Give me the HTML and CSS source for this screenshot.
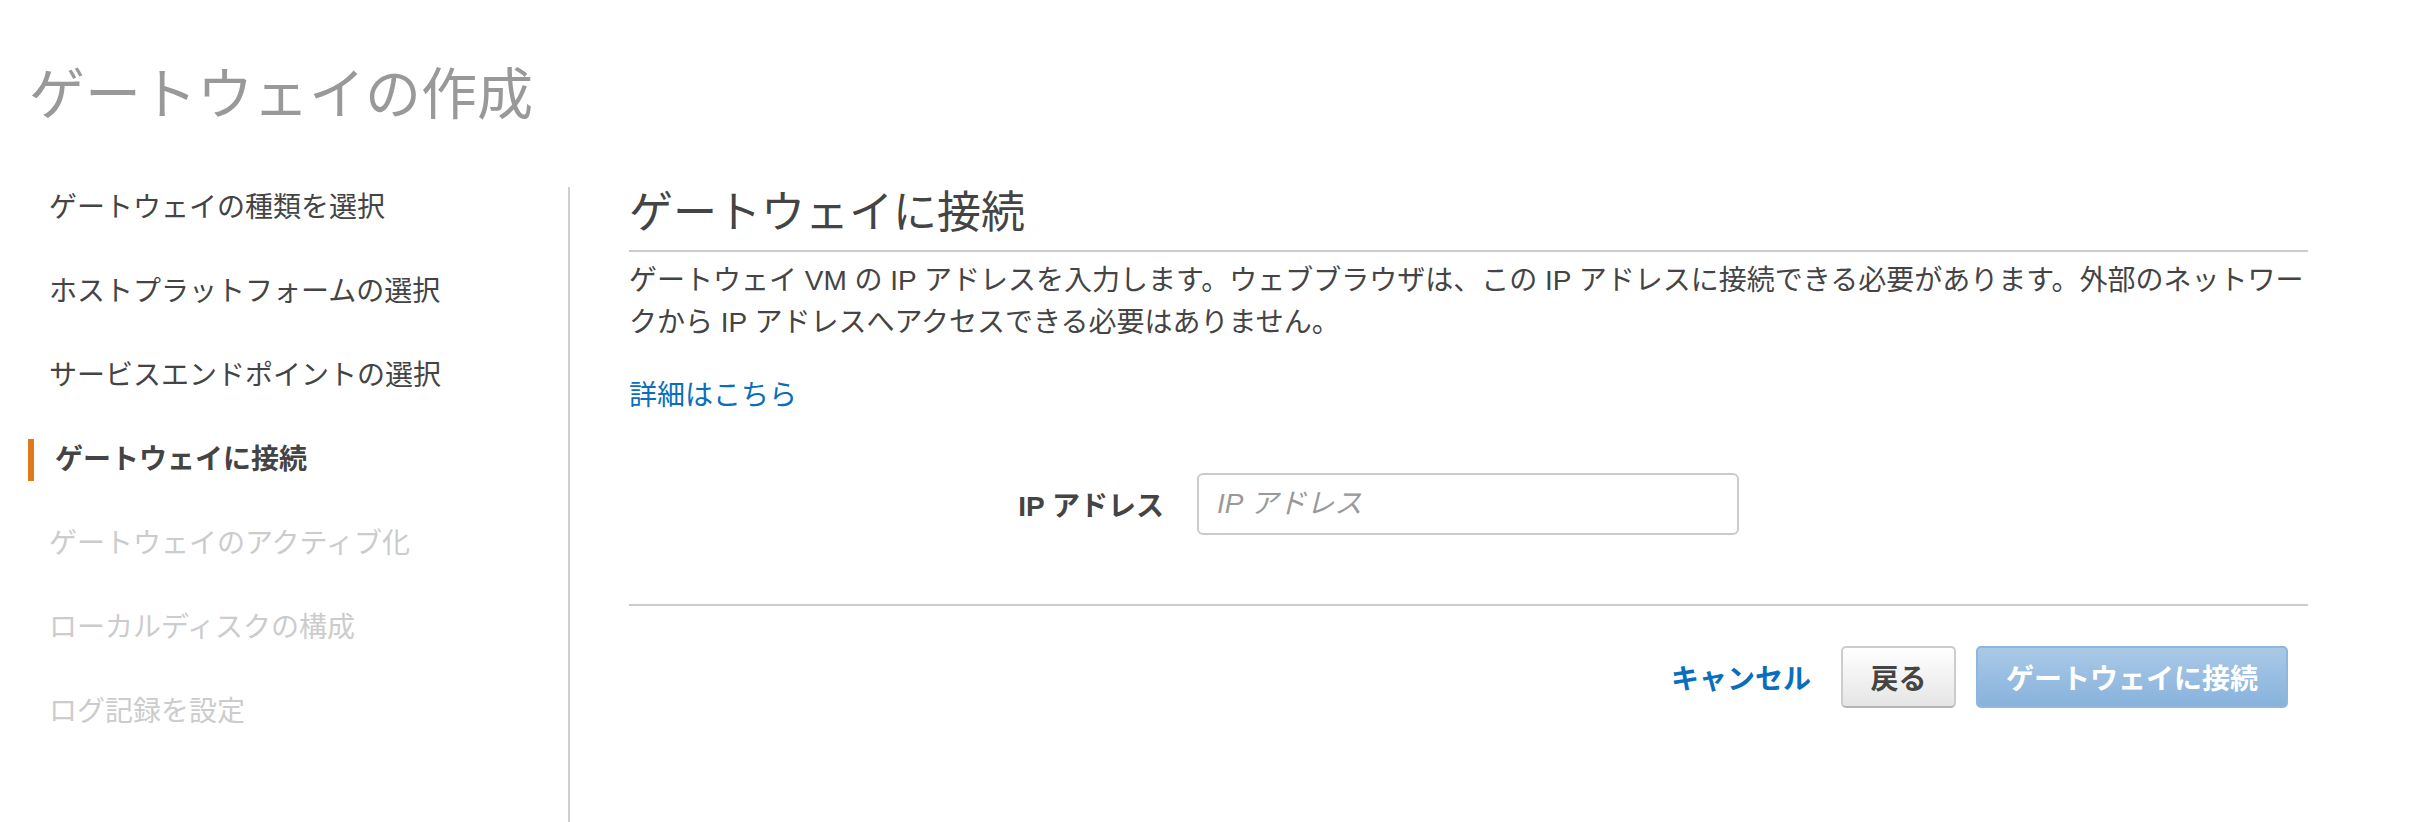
FILE: index.html
```html
<!DOCTYPE html>
<html lang="ja">
<head>
<meta charset="utf-8">
<title>ゲートウェイの作成</title>
<link rel="stylesheet" href="styles.css">
</head>
<body>
<div class="page">
  <h1 class="title">ゲートウェイの作成</h1>
  <div class="wizard">
    <nav class="steps">
      <ul class="step-list">
        <li class="step">ゲートウェイの種類を選択</li>
        <li class="step">ホストプラットフォームの選択</li>
        <li class="step">サービスエンドポイントの選択</li>
        <li class="step step-active">ゲートウェイに接続</li>
        <li class="step step-disabled">ゲートウェイのアクティブ化</li>
        <li class="step step-disabled">ローカルディスクの構成</li>
        <li class="step step-disabled">ログ記録を設定</li>
      </ul>
    </nav>
    <main class="content">
      <h2 class="heading">ゲートウェイに接続</h2>
      <p class="desc">ゲートウェイ VM の IP アドレスを入力します。ウェブブラウザは、この IP アドレスに接続できる必要があります。外部のネットワークから IP アドレスへアクセスできる必要はありません。</p>
      <a class="more-link" href="#">詳細はこちら</a>
      <div class="form-row">
        <label class="form-label" for="ip">IP アドレス</label>
        <input class="form-input" id="ip" type="text" placeholder="IP アドレス">
      </div>
      <div class="actions">
        <a class="cancel" href="#">キャンセル</a>
        <button class="btn btn-back" type="button">戻る</button>
        <button class="btn btn-primary" type="button">ゲートウェイに接続</button>
      </div>
    </main>
  </div>
</div>
</body>
</html>
```
FILE: styles.css
```css
html, body {
  margin: 0;
  padding: 0;
  background: #ffffff;
}

body {
  font-family: "Liberation Sans", "Noto Sans CJK JP", sans-serif;
  color: #444444;
  overflow: hidden;
}

.page {
  width: 2418px;
}

.title {
  margin: 61px 0 0 0;
  padding-left: 29px;
  font-size: 56px;
  line-height: 67px;
  font-weight: normal;
  color: #999999;
}

.wizard {
  display: flex;
  margin-top: 59px;
  min-height: 660px;
}

.steps {
  box-sizing: border-box;
  width: 570px;
  padding-left: 28px;
  border-right: 2px solid #cfcfcf;
}

.step-list {
  list-style: none;
  margin: 0;
  padding: 0;
}

.step {
  font-size: 28px;
  line-height: 42px;
  height: 42px;
  margin-bottom: 42px;
  padding-left: 15px;
  border-left: 6px solid transparent;
  color: #444444;
  white-space: nowrap;
}

.step-active {
  border-left-color: #df7a1c;
  padding-left: 21px;
  font-weight: bold;
  color: #444444;
}

.step-disabled {
  color: #cccccc;
}

.content {
  width: 1679px;
  margin-left: 59px;
}

.heading {
  margin: 0;
  font-size: 44px;
  line-height: 52px;
  font-weight: normal;
  color: #444444;
  padding-bottom: 11px;
  border-bottom: 2px solid #cccccc;
}

.desc {
  margin: 8px 0 0 0;
  font-size: 28px;
  line-height: 42px;
  color: #444444;
}

.more-link {
  display: inline-block;
  margin-top: 31px;
  font-size: 28px;
  line-height: 42px;
  color: #0a6ebd;
  text-decoration: none;
}

.form-row {
  display: flex;
  align-items: center;
  gap: 33px;
  margin-top: 56px;
  padding-bottom: 69px;
  border-bottom: 2px solid #cccccc;
}

.form-label {
  width: 535px;
  text-align: right;
  font-size: 28px;
  font-weight: bold;
  color: #444444;
}

.form-input {
  box-sizing: border-box;
  width: 542px;
  height: 62px;
  padding: 0 18px;
  border: 2px solid #cccccc;
  border-radius: 6px;
  font-family: "Liberation Sans", "Noto Sans CJK JP", sans-serif;
  font-size: 28px;
  color: #444444;
  background: #ffffff;
  outline: none;
}

.form-input::placeholder {
  color: #999999;
  font-style: italic;
}

.actions {
  display: flex;
  justify-content: flex-end;
  align-items: center;
  margin-top: 40px;
  padding-right: 20px;
}

.cancel {
  font-size: 28px;
  font-weight: bold;
  color: #0a6ebd;
  text-decoration: none;
  margin-right: 30px;
}

.btn {
  box-sizing: border-box;
  height: 62px;
  border-radius: 5px;
  font-family: "Liberation Sans", "Noto Sans CJK JP", sans-serif;
  font-size: 28px;
  font-weight: bold;
  padding: 0 28px;
  cursor: pointer;
}

.btn-back {
  width: 115px;
  padding: 0;
  color: #444444;
  background: linear-gradient(#ffffff, #e5e5e5);
  border: 2px solid #cccccc;
  border-bottom-color: #b5b5b5;
}

.btn-primary {
  width: 312px;
  margin-left: 20px;
  color: #ffffff;
  background: linear-gradient(#aac9e7, #88b2dc);
  border: 2px solid #8fb6dc;
}
```
